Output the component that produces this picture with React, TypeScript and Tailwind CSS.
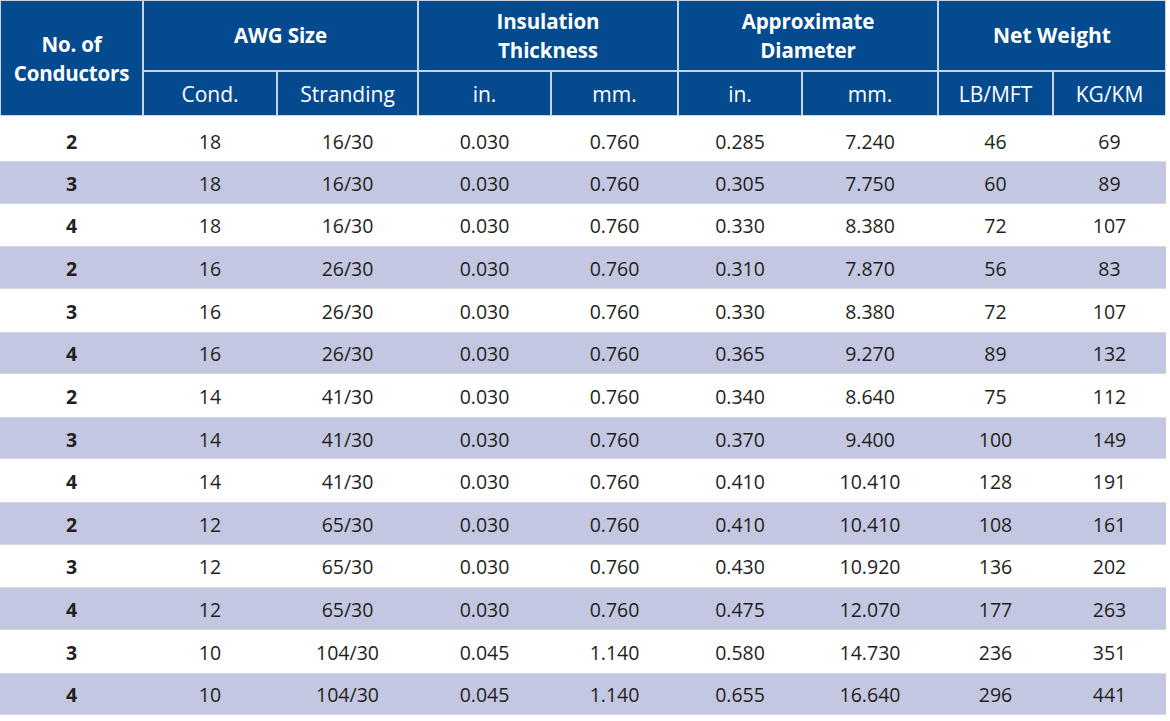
import React from "react";

const rows: [string, string, string, string, string, string, string, string, string][] = [
  ["2", "18", "16/30", "0.030", "0.760", "0.285", "7.240", "46", "69"],
  ["3", "18", "16/30", "0.030", "0.760", "0.305", "7.750", "60", "89"],
  ["4", "18", "16/30", "0.030", "0.760", "0.330", "8.380", "72", "107"],
  ["2", "16", "26/30", "0.030", "0.760", "0.310", "7.870", "56", "83"],
  ["3", "16", "26/30", "0.030", "0.760", "0.330", "8.380", "72", "107"],
  ["4", "16", "26/30", "0.030", "0.760", "0.365", "9.270", "89", "132"],
  ["2", "14", "41/30", "0.030", "0.760", "0.340", "8.640", "75", "112"],
  ["3", "14", "41/30", "0.030", "0.760", "0.370", "9.400", "100", "149"],
  ["4", "14", "41/30", "0.030", "0.760", "0.410", "10.410", "128", "191"],
  ["2", "12", "65/30", "0.030", "0.760", "0.410", "10.410", "108", "161"],
  ["3", "12", "65/30", "0.030", "0.760", "0.430", "10.920", "136", "202"],
  ["4", "12", "65/30", "0.030", "0.760", "0.475", "12.070", "177", "263"],
  ["3", "10", "104/30", "0.045", "1.140", "0.580", "14.730", "236", "351"],
  ["4", "10", "104/30", "0.045", "1.140", "0.655", "16.640", "296", "441"],
];

const cols = "grid grid-cols-[141px_132px_139px_131px_125px_122px_134px_113px_111px] gap-x-[2px]";

export default function App() {
  return (
    <div
      className="w-[1170px] h-[721px] bg-white overflow-hidden"
      style={{ fontFamily: '"Open Sans", "Noto Sans", sans-serif' }}
    >
      <div className="w-[1166px]">
        {/* Header */}
        <div
          className={`${cols} grid-rows-[69px_43px] gap-y-[2px] bg-[#c9d3e4] p-[1px] text-white`}
        >
          <div className="row-span-2 bg-[#044a8f] flex items-center justify-center text-center font-bold text-[20.5px] leading-[29px] pt-[2px] tracking-[-0.2px]">
            No. of
            <br />
            Conductors
          </div>
          <div className="col-span-2 bg-[#044a8f] flex items-center justify-center font-bold text-[20.5px] leading-[29px] tracking-[-0.1px]">
            AWG Size
          </div>
          <div className="col-span-2 bg-[#044a8f] flex items-center justify-center text-center font-bold text-[20.5px] leading-[29px] tracking-[-0.1px]">
            Insulation
            <br />
            Thickness
          </div>
          <div className="col-span-2 bg-[#044a8f] flex items-center justify-center text-center font-bold text-[20.5px] leading-[29px] tracking-[-0.1px]">
            Approximate
            <br />
            Diameter
          </div>
          <div className="col-span-2 bg-[#044a8f] flex items-center justify-center font-bold text-[21px] leading-[29px]">
            Net Weight
          </div>
          {["Cond.", "Stranding", "in.", "mm.", "in.", "mm.", "LB/MFT", "KG/KM"].map((t, i) => (
            <div
              key={i}
              className="bg-[#044a8f] flex items-center justify-center text-[21px] pt-[3px] font-normal"
            >
              {t}
            </div>
          ))}
        </div>

        {/* Body */}
        <div>
          {rows.map((r, i) => (
            <div
              key={i}
              className={`${cols} ${i === 0 ? "h-[45px] pt-[6px]" : "h-[42.65px] pt-[2px]"} ${
                i % 2 === 1 ? "bg-[#c3c7e1] border-y border-[#d4d7ea]" : "bg-white"
              } items-center text-[19.5px] text-[#231f20] px-[1px]`}
            >
              {r.map((c, j) => (
                <div key={j} className={`text-center ${j === 0 ? "font-bold" : ""}`}>
                  {c}
                </div>
              ))}
            </div>
          ))}
        </div>
      </div>
    </div>
  );
}
